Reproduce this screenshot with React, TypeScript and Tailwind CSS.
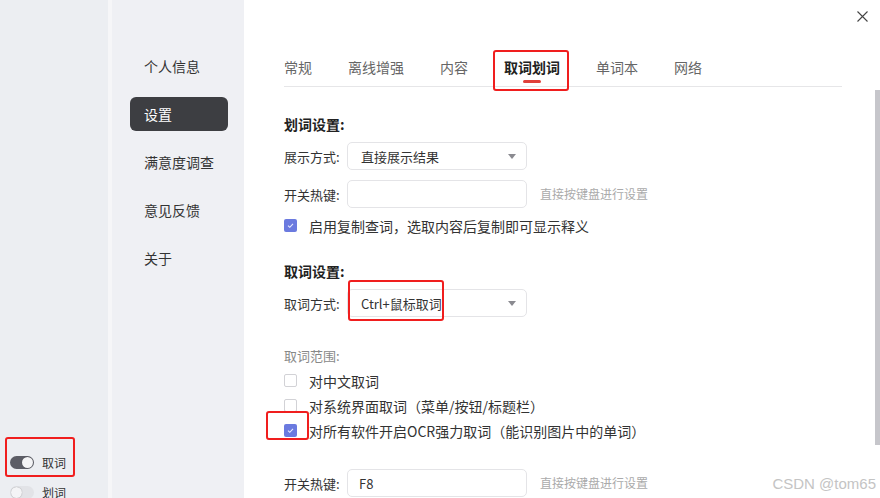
import React from "react";

const font = { fontFamily: '"Noto Sans CJK SC", "Noto Sans", sans-serif' };

function Toggle({ on }: { on: boolean }) {
  return (
    <div
      className={
        "relative w-[24px] h-[13px] rounded-full shrink-0 " +
        (on ? "bg-[#5c5d66]" : "bg-[#e2e3e7]")
      }
    >
      <div
        className={
          "absolute top-[1px] w-[11px] h-[11px] rounded-full bg-[#f4f4f6] shadow-[0_0_1px_rgba(0,0,0,0.4)] " +
          (on ? "right-[1px]" : "left-[1px]")
        }
      />
    </div>
  );
}

function Check({ checked }: { checked: boolean }) {
  return checked ? (
    <div className="w-[13px] h-[13px] rounded-[2px] bg-[#6b7adf] flex items-center justify-center shrink-0">
      <svg width="9" height="9" viewBox="0 0 9 9">
        <path d="M2 4.6 L3.8 6.3 L7 2.8" stroke="#e8ebff" strokeWidth="1.1" fill="none" />
      </svg>
    </div>
  ) : (
    <div className="w-[13px] h-[13px] rounded-[2px] border border-[#d2d2d6] bg-white shrink-0" />
  );
}

function Select({ value }: { value: string }) {
  return (
    <div className="w-[180px] h-[28px] rounded-[5px] border border-[#e4e4e7] bg-white flex items-center pl-[13px] pr-[10px] justify-between">
      <span className="text-[13px] text-[#333] leading-none">{value}</span>
      <svg width="8" height="5" viewBox="0 0 8 5">
        <path d="M0 0 H8 L4 5 Z" fill="#8a8a90" />
      </svg>
    </div>
  );
}

function Input({ value }: { value?: string }) {
  return (
    <div className="w-[180px] h-[28px] rounded-[5px] border border-[#e4e4e7] bg-white flex items-center pl-[11px]">
      <span className="text-[13px] text-[#333] leading-none">{value}</span>
    </div>
  );
}

function Row({ label, children }: { label: string; children: React.ReactNode }) {
  return (
    <div className="flex items-center">
      <span className="w-[63px] text-[13px] text-[#333] leading-none">{label}</span>
      {children}
    </div>
  );
}

function CheckRow({ checked, text }: { checked: boolean; text: string }) {
  return (
    <div className="flex items-center gap-[12px] h-[25px]">
      <Check checked={checked} />
      <span className="text-[14px] text-[#333] leading-none">{text}</span>
    </div>
  );
}

export default function App() {
  const tabs = ["常规", "离线增强", "内容", "取词划词", "单词本", "网络"];
  const nav = ["个人信息", "设置", "满意度调查", "意见反馈", "关于"];
  return (
    <div className="relative w-[880px] h-[498px] overflow-hidden flex bg-white" style={font}>
      {/* left strip */}
      <div className="w-[108px] bg-[#eceef2] relative overflow-hidden">
        <div className="flex flex-col gap-[17px] pl-[10px] pt-[456px]">
          <div className="flex items-center gap-[8px] h-[13px]">
            <Toggle on />
            <span className="text-[12px] text-[#333] leading-none">取词</span>
          </div>
          <div className="flex items-center gap-[8px] h-[13px]">
            <Toggle on={false} />
            <span className="text-[12px] text-[#333] leading-none">划词</span>
          </div>
        </div>
        <div className="absolute left-[5px] top-[437px] w-[70px] h-[40px] border-2 border-[#f01e1e] rounded-[3px]" />
      </div>
      <div className="w-[4px] bg-[#f6f6f8]" />
      {/* nav */}
      <div className="w-[132px] bg-[#eff0f4] pt-[49px] pl-[18px]">
        <div className="flex flex-col gap-[14px]">
          {nav.map((n, i) => (
            <div
              key={n}
              className={
                "w-[98px] h-[34px] rounded-[6px] flex items-center pl-[14px] text-[14px] leading-none " +
                (i === 1 ? "bg-[#3d3e42] text-white" : "text-[#333]")
              }
            >
              {n}
            </div>
          ))}
        </div>
      </div>
      {/* main */}
      <div className="flex-1 relative pt-[57px] pl-[40px] pr-[38px]">
        <svg className="absolute right-[12px] top-[11px]" width="11" height="11" viewBox="0 0 11 11">
          <path d="M0.5 0.5 L10.5 10.5 M10.5 0.5 L0.5 10.5" stroke="#444" strokeWidth="1.1" />
        </svg>
        <div className="flex gap-[36px] border-b border-[#e6e6e8] pb-[9px]">
          {tabs.map((t, i) => (
            <div key={t} className="relative">
              <span
                className={
                  "text-[14px] leading-[20px] block " +
                  (i === 3 ? "text-[#222] font-bold" : "text-[#666]")
                }
              >
                {t}
              </span>
              {i === 3 && (
                <>
                  <div className="absolute left-1/2 -translate-x-1/2 bottom-[-6px] w-[18px] h-[3px] rounded-full bg-[#e0403a]" />
                  <div className="absolute left-[-11px] top-[-7px] w-[76px] h-[41px] border-2 border-[#f01e1e] rounded-[3px]" />
                </>
              )}
            </div>
          ))}
        </div>

        <div className="mt-[27px] text-[14px] font-bold text-[#222] leading-[20px]">划词设置:</div>
        <div className="mt-[8px] flex flex-col gap-[10px]">
          <Row label="展示方式:">
            <Select value="直接展示结果" />
          </Row>
          <Row label="开关热键:">
            <Input />
            <span className="ml-[13px] text-[12px] text-[#aaa] leading-none">直接按键盘进行设置</span>
          </Row>
        </div>
        <div className="mt-[5px]">
          <CheckRow checked text="启用复制查词，选取内容后复制即可显示释义" />
        </div>

        <div className="mt-[23px] text-[14px] font-bold text-[#222] leading-[20px]">取词设置:</div>
        <div className="mt-[8px] relative">
          <Row label="取词方式:">
            <Select value="Ctrl+鼠标取词" />
          </Row>
          <div className="absolute left-[64px] top-[-9px] w-[96px] h-[41px] border-2 border-[#f01e1e] rounded-[3px]" />
        </div>

        <div className="mt-[29px] text-[13px] text-[#888] leading-[20px]">取词范围:</div>
        <div className="mt-[2px] flex flex-col">
          <CheckRow checked={false} text="对中文取词" />
          <CheckRow checked={false} text="对系统界面取词（菜单/按钮/标题栏）" />
          <div className="relative">
            <CheckRow checked text="对所有软件开启OCR强力取词（能识别图片中的单词）" />
            <div className="absolute left-[-18px] top-[-7px] w-[43px] h-[29px] border-2 border-[#f01e1e] rounded-[3px]" />
          </div>
        </div>

        <div className="mt-[26px]">
          <Row label="开关热键:">
            <Input value="F8" />
            <span className="ml-[13px] text-[12px] text-[#aaa] leading-none">直接按键盘进行设置</span>
          </Row>
        </div>

        <div className="absolute right-0 top-[90px] w-[5px] h-[355px] bg-[#c6c6cb]" />
        <div
          className="absolute right-[4px] top-[476px] text-[15px] text-[#c4c4c4] leading-none"
          style={{ fontFamily: '"Liberation Sans", Arial, sans-serif' }}
        >
          CSDN @tom65
        </div>
      </div>
    </div>
  );
}
